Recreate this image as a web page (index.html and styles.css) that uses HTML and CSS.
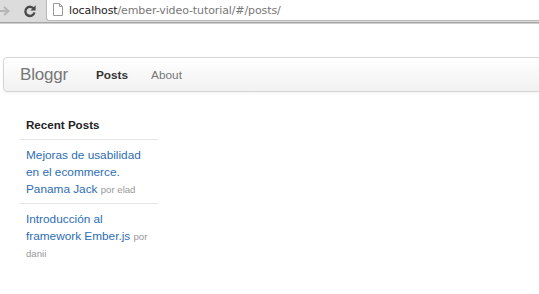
FILE: index.html
```html
<!DOCTYPE html>
<html>
<head>
<meta charset="utf-8">
<link rel="stylesheet" href="styles.css">
</head>
<body>
<div class="chrome">
  <svg class="fwd" width="14" height="14" viewBox="0 0 14 14"><path d="M0 7 H10 M6 3 L10.5 7 L6 11" fill="none" stroke="#b5b5b5" stroke-width="2"/></svg>
  <svg class="reload" width="14" height="14" viewBox="0 0 14 14"><path d="M11 5.2 A4.6 4.6 0 1 0 11.4 8.5" fill="none" stroke="#4a4a4a" stroke-width="2.4"/><path d="M12.6 1.2 L12.6 6.6 L7.4 6.6 Z" fill="#4a4a4a"/></svg>
  <div class="address">
    <svg class="page" width="10" height="13" viewBox="0 0 10 13"><path d="M0.5 0.5 H6.5 L9.5 3.5 V12.5 H0.5 Z M6.5 0.5 V3.5 H9.5" fill="#fff" stroke="#9a9a9a" stroke-width="1"/></svg>
    <span class="host">localhost</span><span class="path">/ember-video-tutorial/#/posts/</span>
  </div>
</div>
<div class="page-body">
  <div class="navbar">
    <span class="brand">Bloggr</span>
    <nav class="nav">
      <a class="nav-link active">Posts</a>
      <a class="nav-link">About</a>
    </nav>
  </div>
  <div class="sidebar">
    <div class="side-head">Recent Posts</div>
    <ul class="posts">
      <li class="post"><a class="post-link">Mejoras de usabilidad en el ecommerce. Panama Jack</a> <small class="by">por elad</small></li>
      <li class="post"><a class="post-link">Introducción al framework Ember.js</a> <small class="by">por danii</small></li>
    </ul>
  </div>
</div>
</body>
</html>
```
FILE: styles.css
```css
html, body { margin: 0; padding: 0; background: #fff; }
body { font-family: "Liberation Sans", Arial, sans-serif; width: 539px; height: 294px; overflow: hidden; }

.chrome {
  height: 22px;
  background: #dcdcdc;
  border-bottom: 1px solid #a4a4a4;
  box-shadow: 0 1px 0 #cfcfcf;
  display: flex;
  align-items: center;
}
.fwd { margin-left: -2px; }
.reload { margin-left: 11px; }
.address {
  margin-left: 9px;
  align-self: flex-start;
  height: 20px;
  flex: 1;
  background: #fff;
  border-left: 1px solid #b8b8b8;
  border-bottom: 1px solid #b8b8b8;
  border-bottom-left-radius: 3px;
  display: flex;
  align-items: center;
  font-family: "DejaVu Sans", sans-serif;
  font-size: 11px;
  letter-spacing: -0.1px;
}
.page { margin-left: 6px; margin-right: 6px; margin-top: -2px; }
.host { color: #222; }
.path { color: #777; }

.page-body { padding-top: 34px; }
.navbar {
  margin-left: 3px;
  margin-right: -10px;
  height: 33px;
  border: 1px solid #d6d6d6;
  border-radius: 4px;
  background: linear-gradient(#ffffff, #f1f1f1);
  box-shadow: 0 1px 3px rgba(0,0,0,0.06);
  display: flex;
  align-items: center;
}
.brand {
  margin-left: 16px;
  font-size: 17px;
  color: #777;
  letter-spacing: -0.2px;
}
.nav { display: flex; margin-left: 28px; gap: 23px; }
.nav-link { font-size: 11.8px; color: #777; }
.nav-link.active { color: #333; font-weight: bold; }

.sidebar { margin-left: 19px; width: 139px; margin-top: 24px; }
.side-head {
  font-size: 11.6px;
  font-weight: bold;
  color: #222;
  line-height: 17px;
  padding: 0 0 6px 7px;
  border-bottom: 1px solid #e6e6e6;
}
.posts { list-style: none; margin: 0; padding: 0; }
.post {
  font-size: 11.8px;
  line-height: 17px;
  padding: 7px 5px 5px 7px;
  border-bottom: 1px solid #e6e6e6;
}
.post:last-child { border-bottom: none; }
.post-link { color: #2d6db5; }
.by { font-size: 9.6px; line-height: 17px; color: #999; }
```
